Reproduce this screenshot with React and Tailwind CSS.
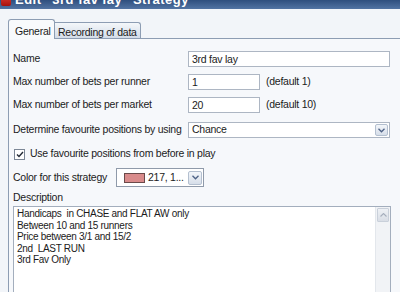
import React from 'react';

const font = { fontFamily: '"Liberation Sans", Arial, sans-serif' };

const DropBtn = ({ className = "" }) => (
    <div className={`flex items-center justify-center border border-[#b3bfcf] rounded-[2px] bg-gradient-to-b from-[#f3f6fa] to-[#d6dee9] ${className}`}>
        <svg width="7" height="5" viewBox="0 0 7 5">
            <path d="M0.5 0.8 L3.5 3.8 L6.5 0.8" stroke="#4d6185" strokeWidth="1.3" fill="none" />
        </svg>
    </div>
);

const Field = ({ label, children }) => (
    <div className="flex items-center">
        <span className="w-[175px] shrink-0 whitespace-nowrap">{label}</span>
        {children}
    </div>
);

const App = () => {
    const description = [
        "Handicaps  in CHASE and FLAT AW only",
        "Between 10 and 15 runners",
        "Price between 3/1 and 15/2",
        "2nd  LAST RUN",
        "3rd Fav Only",
    ];

    return (
        <div className="w-[400px] h-[292px] overflow-hidden bg-[#f2f5f9] text-[10.5px] tracking-[-0.25px] text-[#1b1b1b]" style={font}>
            {/* Title bar - mostly cut off */}
            <div className="h-[9px] overflow-hidden flex items-end bg-gradient-to-b from-[#2f4f7e] to-[#5274a3]">
                <div className="flex items-center gap-[4px] h-[18px] pl-[1px]">
                    <div className="w-[10px] h-[12px] rounded-[2px] bg-gradient-to-b from-[#e8413a] to-[#a8100c]" />
                    <span className="text-white font-bold text-[13px] tracking-[0.5px] whitespace-nowrap">Edit "3rd fav lay" Strategy</span>
                </div>
            </div>

            <div className="pl-[8px] pt-[10px]">
                {/* Tabs */}
                <div className="flex items-end h-[19px] whitespace-nowrap">
                    <div className="h-[20px] mb-[-1px] w-[47px] pl-[6px] pt-[4px] border border-b-0 border-[#8d9db3] rounded-t-[3px] bg-[#f8fafc] relative z-10">
                        General
                    </div>
                    <div className="h-[16px] w-[86px] pl-[3px] pt-[2px] border border-l-0 border-b-0 border-[#8d9db3] rounded-tr-[3px] bg-gradient-to-b from-[#f4f7fa] to-[#d3dce8]">
                        Recording of data
                    </div>
                </div>

                {/* Panel */}
                <div className="border-l border-t border-[#8d9db3] bg-[#f6f8fb] pl-[4px] pr-[10px] pt-[12px] h-[260px]">
                    <div className="flex flex-col">
                        <Field label="Name">
                            <div className="w-[203px] h-[16px] border border-[#adb6c3] bg-white pl-[3px] leading-[14px]">3rd fav lay</div>
                        </Field>
                        <div className="mt-[7px]">
                            <Field label="Max number of bets per runner">
                                <div className="w-[72px] h-[16px] border border-[#adb6c3] bg-white pl-[3px] leading-[14px]">1</div>
                                <span className="ml-[6px] whitespace-nowrap">(default 1)</span>
                            </Field>
                        </div>
                        <div className="mt-[7px]">
                            <Field label="Max number of bets per market">
                                <div className="w-[72px] h-[16px] border border-[#adb6c3] bg-white pl-[3px] leading-[14px]">20</div>
                                <span className="ml-[6px] whitespace-nowrap">(default 10)</span>
                            </Field>
                        </div>
                        <div className="mt-[9px]">
                            <Field label="Determine favourite positions by using">
                                <div className="w-[202px] h-[16px] border border-[#adb6c3] bg-white pl-[3px] flex items-center justify-between">
                                    <span>Chance</span>
                                    <DropBtn className="w-[13px] h-[12px] mr-[1px]" />
                                </div>
                            </Field>
                        </div>

                        {/* Checkbox */}
                        <div className="flex items-center mt-[10px] pl-[1px] h-[12px]">
                            <div className="w-[11px] h-[11px] border border-[#7c8796] bg-white flex items-center justify-center">
                                <svg width="8" height="7" viewBox="0 0 8 7">
                                    <path d="M1 3.5 L3 5.5 L7 1" stroke="#232a36" strokeWidth="1.4" fill="none" />
                                </svg>
                            </div>
                            <span className="ml-[5px] whitespace-nowrap">Use favourite positions from before in play</span>
                        </div>

                        {/* Color */}
                        <div className="flex items-center mt-[8px]">
                            <span className="w-[103px] shrink-0 whitespace-nowrap">Color for this strategy</span>
                            <div className="w-[88px] h-[19px] border border-[#8f9aaa] bg-white flex items-center pl-[7px]">
                                <div className="w-[21px] h-[10px] bg-[#d98b8b] border border-[#6b4a4a]" />
                                <span className="ml-[3px] whitespace-nowrap">217, 1...</span>
                                <DropBtn className="w-[14px] h-[14px] ml-auto mr-[1px]" />
                            </div>
                        </div>

                        <div className="mt-[3px] h-[14px] leading-[14px]">Description</div>

                        {/* Description */}
                        <div className="mt-[2px] h-[90px] w-[378px] border border-[#a3aebd] bg-white flex">
                            <div className="flex-1 pl-[3px] pt-[1px] text-[10px] tracking-[-0.3px] leading-[11.6px]">
                                {description.map((line, i) => (
                                    <div key={i} className="whitespace-pre">{line}</div>
                                ))}
                            </div>
                            <div className="w-[15px] bg-[#f1f3f6] border-l border-[#e3e7ec]">
                                <div className="h-[14px] mt-[1px] mx-[1px] bg-gradient-to-b from-[#eef1f5] to-[#d9dee6] border border-[#c9d0da] rounded-[1px] flex items-center justify-center">
                                    <svg width="7" height="4" viewBox="0 0 7 4">
                                        <path d="M0.5 3.5 L3.5 0.5 L6.5 3.5" stroke="#a6afbd" strokeWidth="1.1" fill="none" />
                                    </svg>
                                </div>
                            </div>
                        </div>
                    </div>
                </div>
            </div>
        </div>
    );
};

export default App;
